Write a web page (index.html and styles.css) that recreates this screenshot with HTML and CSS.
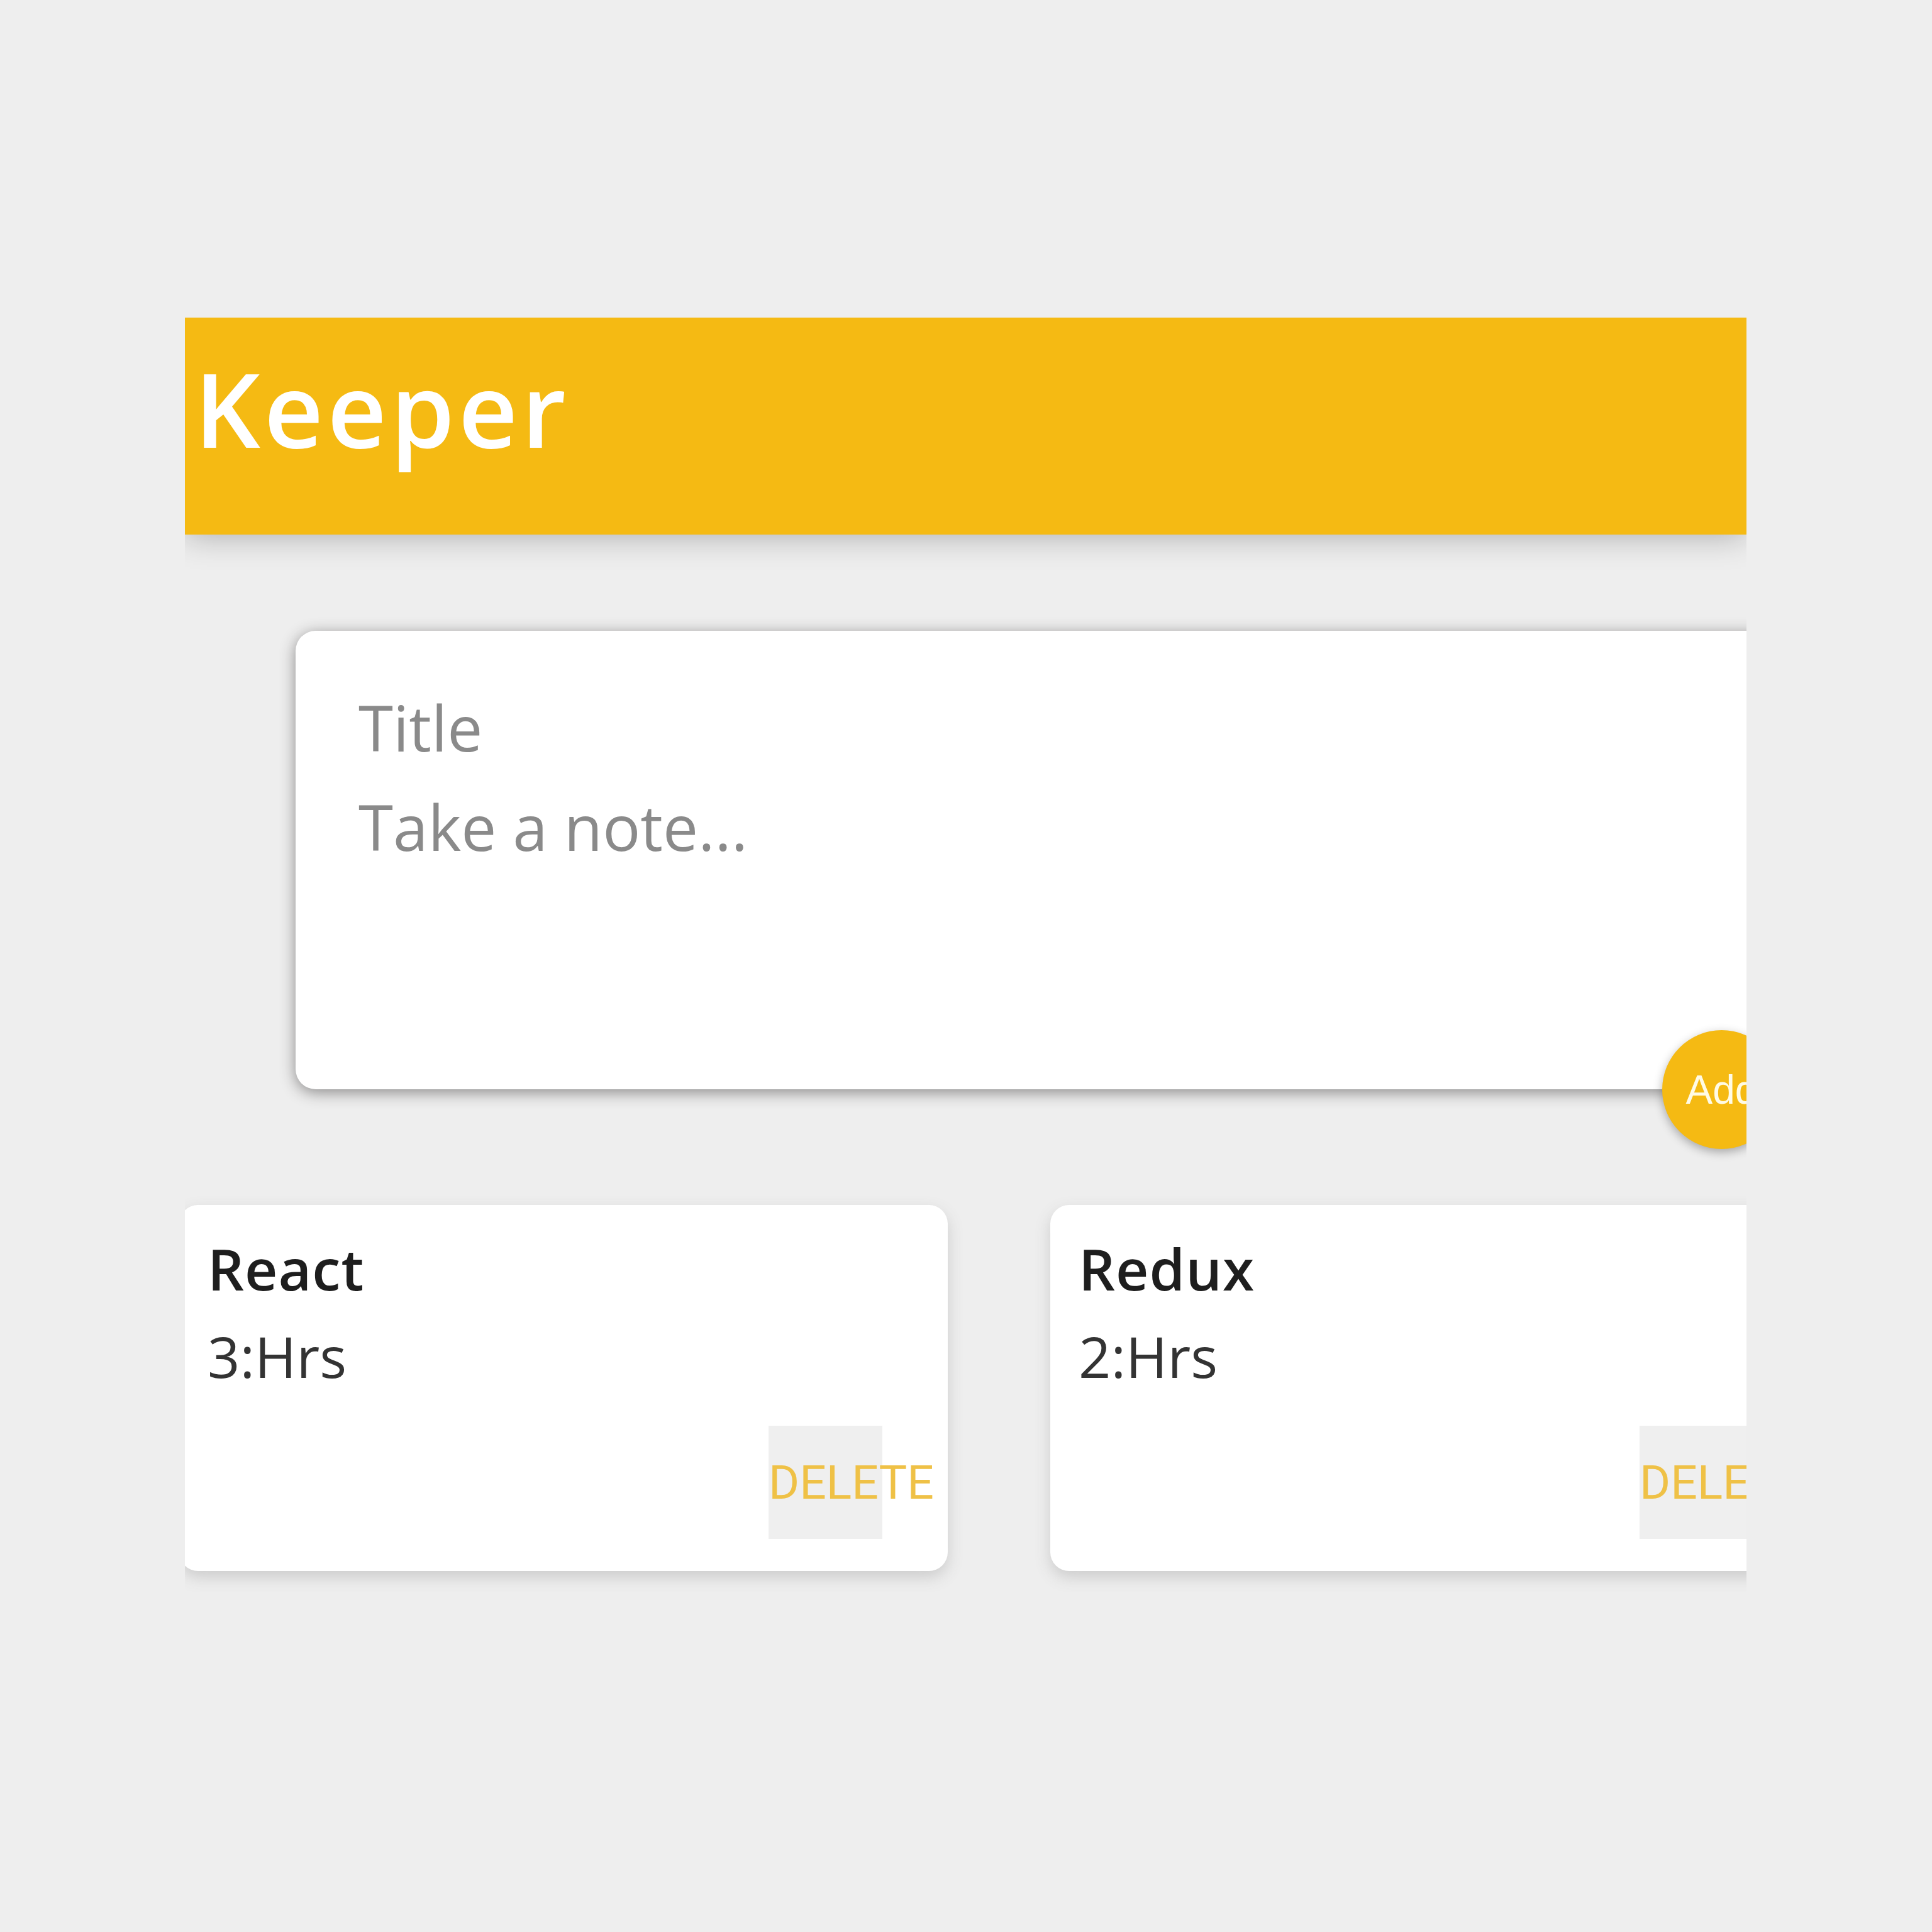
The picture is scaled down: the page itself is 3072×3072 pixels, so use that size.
FILE: index.html
```html
<!DOCTYPE html>
<html lang="en">
<head>
<meta charset="utf-8">
<title>Keeper</title>
<link rel="stylesheet" href="styles.css">
</head>
<body>
<div class="app">
  <header class="header">
    <h1 class="logo">Keeper</h1>
  </header>
  <form class="create-note">
    <div class="field">Title</div>
    <div class="field">Take a note...</div>
    <button type="button" class="add-btn">Add</button>
  </form>
  <div class="notes">
    <div class="note">
      <h2 class="note-title">React</h2>
      <p class="note-body">3:Hrs</p>
      <button type="button" class="del">DELETE</button>
    </div>
    <div class="note">
      <h2 class="note-title">Redux</h2>
      <p class="note-body">2:Hrs</p>
      <button type="button" class="del">DELETE</button>
    </div>
  </div>
</div>
</body>
</html>
```

FILE: styles.css
```css
* {
  box-sizing: border-box;
}

body {
  margin: 0;
  background: #eeeeee;
}

.app {
  width: 2483px;
  margin: 505px 0 0 294px;
  overflow: hidden;
  padding-bottom: 80px;
}

.header {
  position: relative;
  z-index: 1;
  height: 345px;
  background: #f5ba13;
  padding: 62px 0 0 15px;
  box-shadow: 0 0 50px rgba(0, 0, 0, 0.3);
}

.logo {
  margin: 0;
  font-family: "Open Sans", sans-serif;
  font-weight: 600;
  font-size: 164px;
  line-height: 164px;
  letter-spacing: 6px;
  color: #ffffff;
}

.create-note {
  position: relative;
  width: 2452px;
  height: 729px;
  margin: 153px 0 0 176px;
  padding: 74px 0 0 100px;
  background: #ffffff;
  border-radius: 32px;
  box-shadow: 0 5px 25px rgb(138, 137, 137);
}

.field {
  font-family: "Open Sans", sans-serif;
  font-size: 100px;
  line-height: 158px;
  color: #8a8a8a;
}

.add-btn {
  position: absolute;
  right: 90px;
  bottom: -95px;
  width: 189px;
  height: 189px;
  padding: 0;
  border: none;
  border-radius: 50%;
  background: #f5ba13;
  color: #fffbe6;
  font-family: "Liberation Sans", Arial, sans-serif;
  font-size: 64px;
  box-shadow: 0 5px 15px rgba(0, 0, 0, 0.3);
}

.notes {
  display: flex;
  gap: 163px;
  margin: 184px 0 0 -9px;
}

.note {
  flex: none;
  display: flex;
  flex-direction: column;
  width: 1222px;
  height: 582px;
  padding: 32px 52px 0 45px;
  background: #ffffff;
  border-radius: 30px;
  box-shadow: 0 10px 25px #cccccc;
}

.note-title {
  margin: 0;
  font-family: "Open Sans", sans-serif;
  font-weight: 600;
  font-size: 91px;
  line-height: 139px;
  letter-spacing: 1px;
  color: #1e1e1e;
}

.note-body {
  margin: 0;
  font-family: "Open Sans", sans-serif;
  font-weight: 400;
  font-size: 90px;
  line-height: 139px;
  color: #333333;
}

.del {
  align-self: flex-end;
  width: 181px;
  height: 180px;
  margin: 41px 52px 0 0;
  padding: 0;
  border: none;
  background: #efefef;
  color: #efc146;
  font-family: "Roboto", sans-serif;
  font-size: 75px;
  text-align: left;
  white-space: nowrap;
  overflow: visible;
}
```
